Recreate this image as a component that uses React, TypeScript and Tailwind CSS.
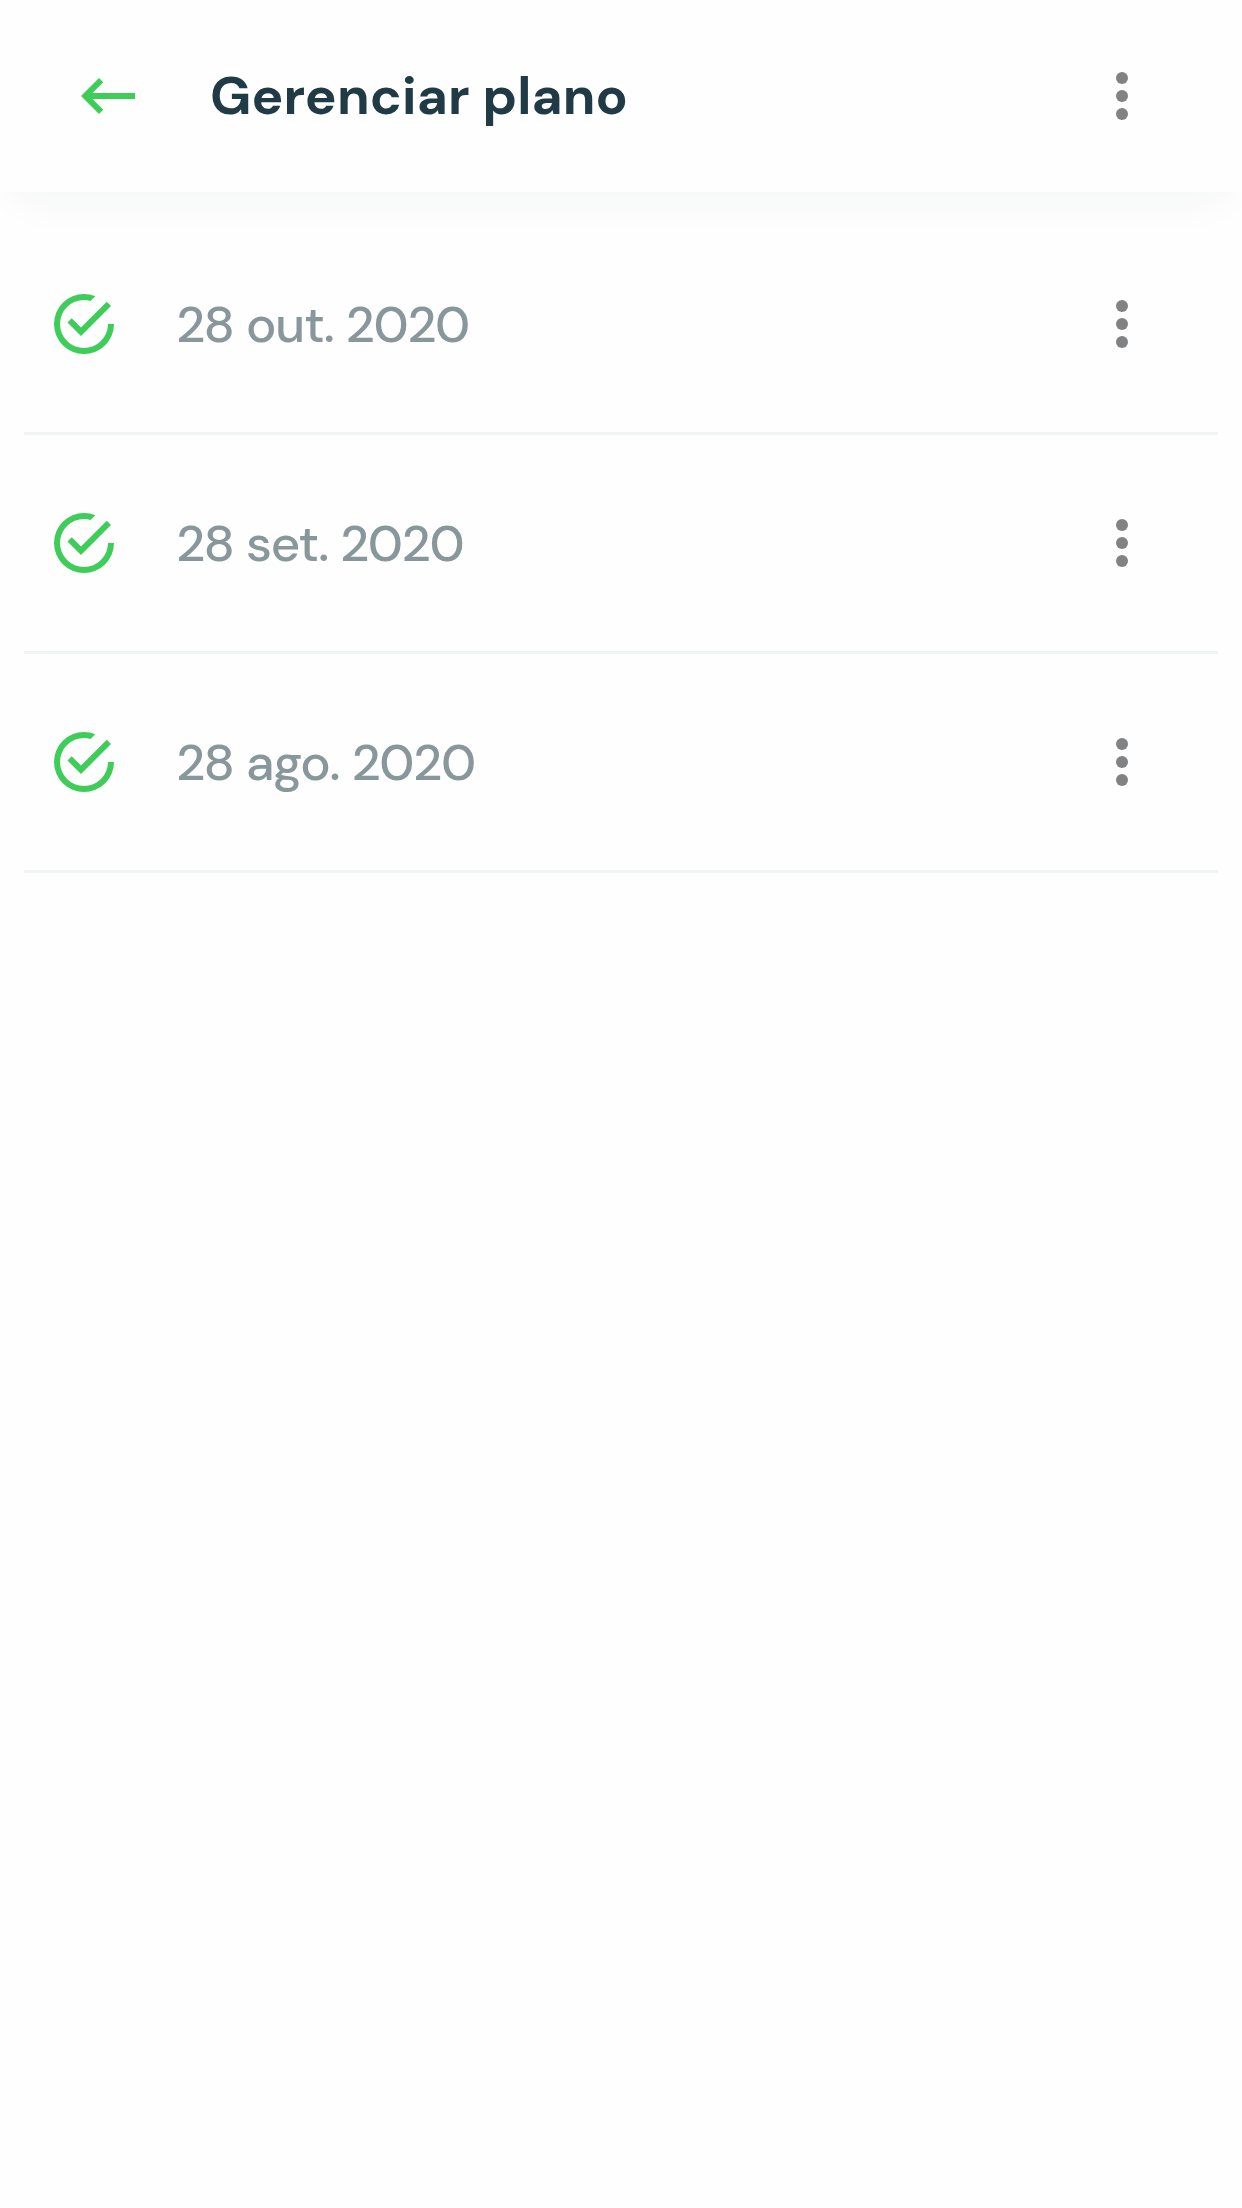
function MoreIcon() {
  return (
    <svg className="size-[72px] fill-[#808283]" viewBox="0 0 24 24">
      <circle cx="12" cy="6" r="2" />
      <circle cx="12" cy="12" r="2" />
      <circle cx="12" cy="18" r="2" />
    </svg>
  );
}

function CheckIcon() {
  return (
    <svg className="size-[72px] fill-[#3dcd58]" viewBox="0 0 24 24">
      <path d="M20 12a8 8 0 1 1-8-8c.76 0 1.5.11 2.2.31l1.57-1.57A9.8 9.8 0 0 0 12 2a10 10 0 1 0 10 10zM7.91 10.08 6.5 11.5 11 16 21 6l-1.41-1.42L11 13.17z" />
    </svg>
  );
}

function BackIcon() {
  return (
    <svg className="size-[72px] fill-[#3dcd58]" viewBox="0 0 24 24">
      <path d="M21 11H6.83l3.58-3.59L9 6l-6 6 6 6 1.41-1.41L6.83 13H21z" />
    </svg>
  );
}

const payments = ["28 out. 2020", "28 set. 2020", "28 ago. 2020"];

export default function App() {
  return (
    <div className="min-h-[2208px] w-full bg-[#fefefe] font-['DM_Sans',Inter,sans-serif]">
      <header className="flex h-[192px] items-center bg-[#fefefe] pl-[72px] pr-[84px] shadow-[0_20px_44px_-18px_rgba(32,59,69,0.06)]">
        <button aria-label="Voltar">
          <BackIcon />
        </button>
        <h1 className="ml-[66px] flex-1 whitespace-nowrap pb-px text-[53px] font-bold leading-[71px] tracking-[0.15px] text-[#203b45]">
          Gerenciar plano
        </h1>
        <button aria-label="Mais opções">
          <MoreIcon />
        </button>
      </header>
      <ul className="px-6 pt-6">
        {payments.map((date) => (
          <li
            key={date}
            className="flex h-[219px] items-center border-b-[3px] border-[#f0f4f5] pl-6 pr-[60px]"
          >
            <CheckIcon />
            <span className="ml-14 flex-1 whitespace-nowrap pt-px text-[51px] font-medium leading-[71px] tracking-[-1.1px] text-[#87979c]">
              {date}
            </span>
            <button aria-label="Mais opções">
              <MoreIcon />
            </button>
          </li>
        ))}
      </ul>
    </div>
  );
}
